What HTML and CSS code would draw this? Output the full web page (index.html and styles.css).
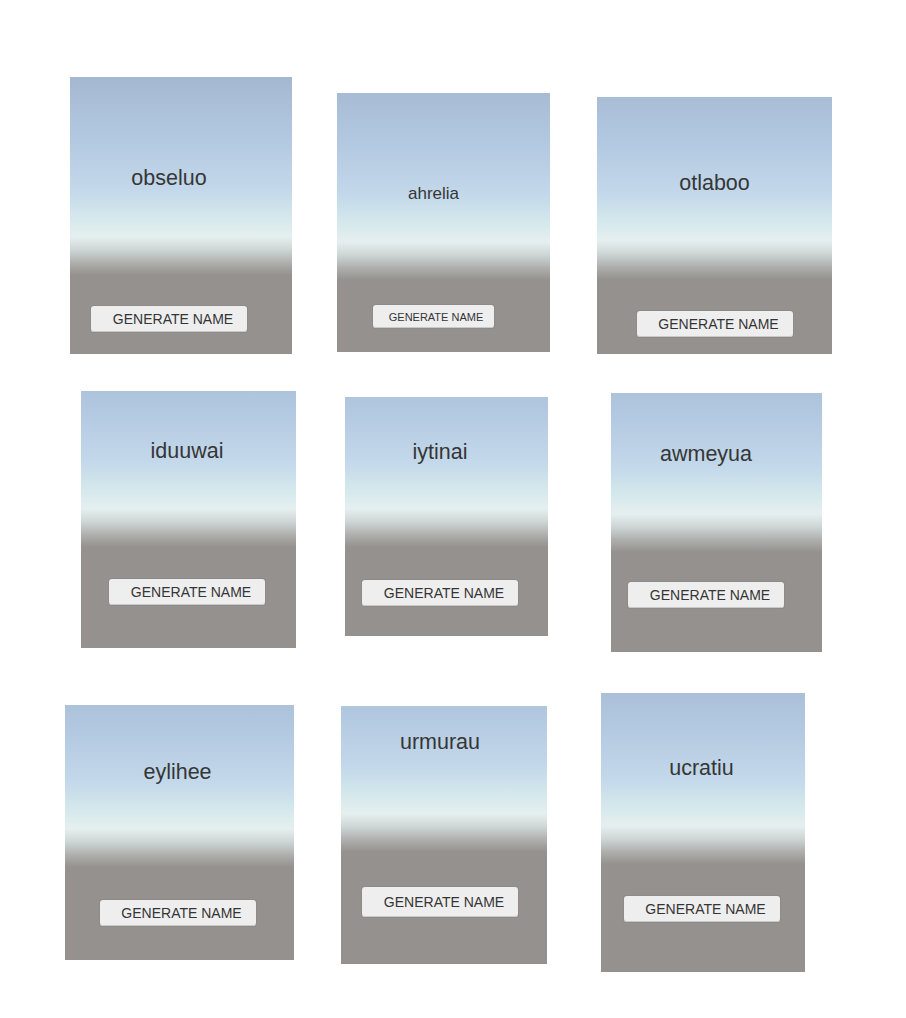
FILE: index.html
```html
<!DOCTYPE html>
<html lang="en">
<head>
<meta charset="utf-8">
<title>Name Generator</title>
<link rel="stylesheet" href="styles.css">
</head>
<body>
<main class="board">
  <section class="card c1"><div class="name">obseluo</div><button class="btn">GENERATE NAME</button></section>
  <section class="card c2"><div class="name">ahrelia</div><button class="btn">GENERATE NAME</button></section>
  <section class="card c3"><div class="name">otlaboo</div><button class="btn">GENERATE NAME</button></section>
  <section class="card c4"><div class="name">iduuwai</div><button class="btn">GENERATE NAME</button></section>
  <section class="card c5"><div class="name">iytinai</div><button class="btn">GENERATE NAME</button></section>
  <section class="card c6"><div class="name">awmeyua</div><button class="btn">GENERATE NAME</button></section>
  <section class="card c7"><div class="name">eylihee</div><button class="btn">GENERATE NAME</button></section>
  <section class="card c8"><div class="name">urmurau</div><button class="btn">GENERATE NAME</button></section>
  <section class="card c9"><div class="name">ucratiu</div><button class="btn">GENERATE NAME</button></section>
</main>
</body>
</html>
```
FILE: styles.css
```css
html, body {
  margin: 0;
  padding: 0;
  background: #ffffff;
}

.board {
  display: grid;
  grid-template-columns: 272px 260px auto;
  grid-template-rows: 314px 302px auto;
  align-items: start;
  justify-items: start;
  padding: 77px 0 0 65px;
  font-family: "Liberation Sans", Arial, sans-serif;
}

.card {
  --h: 180px;
  --pr: 0px;
  --nt: 80px;
  --bb: 30px;
  box-sizing: border-box;
  display: flex;
  flex-direction: column;
  align-items: center;
  padding-right: var(--pr);
  background: linear-gradient(
    to bottom,
    #a4b7d2 calc(var(--h) - 200px),
    #b3c9e1 calc(var(--h) - 135px),
    #c3d8ea calc(var(--h) - 85px),
    #d4e8ec calc(var(--h) - 58px),
    #e6efef calc(var(--h) - 38px),
    #cdd5d5 calc(var(--h) - 25px),
    #aeafad calc(var(--h) - 12px),
    #95918e var(--h),
    #95918e 100%
  );
}

.name {
  margin-top: var(--nt);
  font-size: 21.5px;
  line-height: 26px;
  color: #363636;
  white-space: nowrap;
}

.btn {
  box-sizing: border-box;
  margin-top: auto;
  margin-bottom: var(--bb);
  width: 156px;
  height: 26px;
  padding: 0 0 0 8px;
  border: none;
  border-radius: 3px;
  background: #eeeeee;
  box-shadow: inset 0 -1px 0 #c9c9c9, 0 0 0 1px rgba(120, 118, 116, 0.25);
  font-family: "Liberation Sans", Arial, sans-serif;
  font-size: 14px;
  color: #353535;
  display: flex;
  align-items: center;
  justify-content: center;
  white-space: nowrap;
}

.c1 { --h: 198px; --pr: 24px; --nt: 88px; --bb: 22px; width: 222px; height: 277px; margin: 0 0 0 5px; }
.c2 { --h: 187px; --pr: 20px; --nt: 90px; --bb: 24px; width: 213px; height: 259px; margin: 16px 0 0 0; }
.c3 { --h: 182px; --pr: 0px;  --nt: 73px; --bb: 17px; width: 235px; height: 257px; margin: 20px 0 0 0; }
.c4 { --h: 156px; --pr: 3px;  --nt: 47px; --bb: 43px; width: 215px; height: 257px; margin: 0 0 0 16px; }
.c5 { --h: 150px; --pr: 13px; --nt: 42px; --bb: 30px; width: 203px; height: 239px; margin: 6px 0 0 8px; }
.c6 { --h: 159px; --pr: 21px; --nt: 48px; --bb: 44px; width: 211px; height: 259px; margin: 2px 0 0 14px; }
.c7 { --h: 162px; --pr: 4px;  --nt: 54px; --bb: 34px; width: 229px; height: 255px; margin: 12px 0 0 0; }
.c8 { --h: 146px; --pr: 8px;  --nt: 23px; --bb: 47px; width: 206px; height: 258px; margin: 13px 0 0 4px; }
.c9 { --h: 171px; --pr: 3px;  --nt: 62px; --bb: 50px; width: 204px; height: 279px; margin: 0 0 0 4px; }

.c2 .name {
  font-size: 17px;
  line-height: 22px;
}

.c2 .btn {
  width: 121px;
  height: 23px;
  padding-left: 5px;
  font-size: 11px;
}

.c8 .btn {
  height: 30px;
}
```
